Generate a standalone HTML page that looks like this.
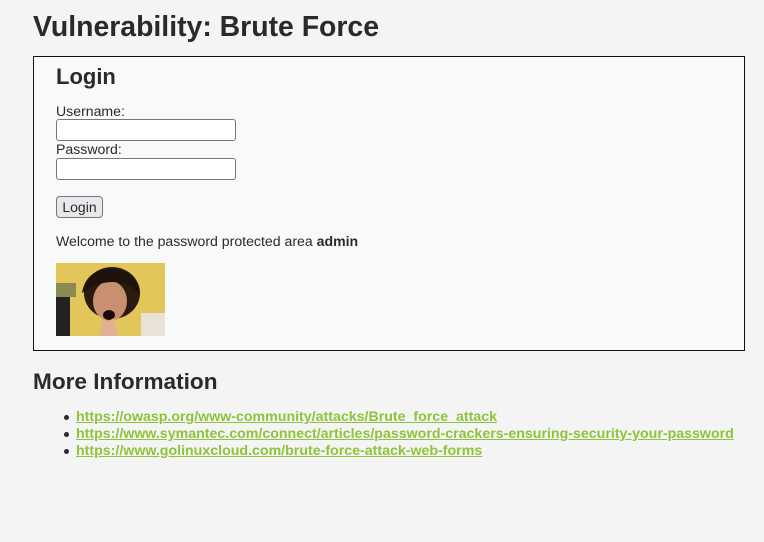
<!DOCTYPE html>
<html><head><style>
body{margin:0;background:#f4f4f4;font-family:"Liberation Sans",sans-serif;color:#2a2a2a;width:764px;height:542px;overflow:hidden;position:relative}
.a{position:absolute;white-space:nowrap}
h1{position:absolute;left:33px;top:11px;margin:0;font-size:28.4px;font-weight:bold;color:#2a2a2a}
.box{position:absolute;left:33px;top:56px;width:710px;height:293px;border:1px solid #111;background:#f8f9f9}
h2{margin:0;font-size:22px;font-weight:bold;position:absolute}
.in{position:absolute;left:22px;width:178px;height:20px;border:1px solid #777;border-radius:3px;background:#fff}
.btn{position:absolute;left:22px;top:139px;width:45px;height:20px;border:1px solid #777;border-radius:4px;background:#e9e9ed;font-size:14px;text-align:center;line-height:20px}
.t{font-size:14.1px}
a{color:#8cc43a;font-weight:bold;text-decoration:underline;font-size:14.2px}
.bul{position:absolute;left:64px;width:5px;height:5px;border-radius:50%;background:#2a2a2a}
</style></head><body>
<h1>Vulnerability: Brute Force</h1>
<div class="box">
<h2 style="left:22px;top:7px">Login</h2>
<div class="a t" style="left:22px;top:46px">Username:</div>
<div class="in" style="top:62px"></div>
<div class="a t" style="left:22px;top:84px">Password:</div>
<div class="in" style="top:101px"></div>
<div class="btn">Login</div>
<div class="a t" style="left:22px;top:176px">Welcome to the password protected area <b>admin</b></div>
<svg class="a" style="left:22px;top:206px" width="109" height="73" viewBox="0 0 109 73">
<rect width="109" height="73" fill="#e2c65a"/>
<rect x="0" y="30" width="14" height="43" fill="#222"/>
<rect x="0" y="20" width="20" height="14" fill="#8a8a55"/>
<rect x="85" y="50" width="24" height="23" fill="#e8e2d8"/>
<ellipse cx="56" cy="30" rx="28" ry="26" fill="#2b1a10"/>
<ellipse cx="54" cy="38" rx="17" ry="20" fill="#c89070"/>
<ellipse cx="53" cy="52" rx="6" ry="5" fill="#1a0a08"/>
<path d="M44 73 L46 56 L52 58 L58 55 L62 73 Z" fill="#e0b090"/>
<path d="M26 30 Q30 6 56 6 Q82 8 84 32 L76 24 Q56 14 36 24 Z" fill="#1e120a"/>
</svg>
</div>
<h2 style="left:33px;top:369px;font-size:22.6px">More Information</h2>
<div class="bul" style="top:415px"></div>
<div class="bul" style="top:432px"></div>
<div class="bul" style="top:449px"></div>
<div class="a" style="left:76px;top:408px"><a>https://owasp.org/www-community/attacks/Brute_force_attack</a></div>
<div class="a" style="left:76px;top:425px"><a>https://www.symantec.com/connect/articles/password-crackers-ensuring-security-your-password</a></div>
<div class="a" style="left:76px;top:442px"><a>https://www.golinuxcloud.com/brute-force-attack-web-forms</a></div>
</body></html>
